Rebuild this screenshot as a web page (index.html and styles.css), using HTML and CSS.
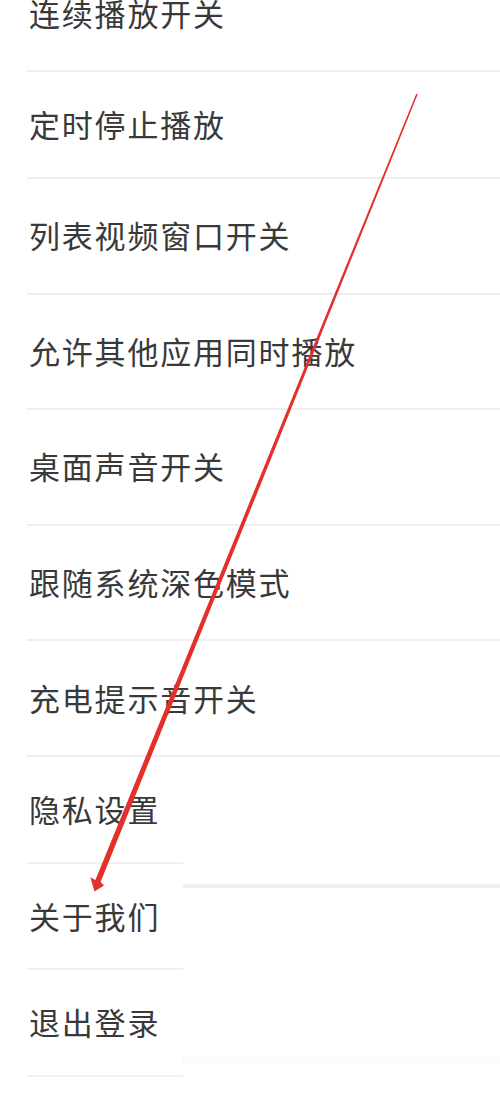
FILE: index.html
```
<!DOCTYPE html>
<html lang="zh-CN">
<head>
<meta charset="utf-8">
<title>设置</title>
<link rel="stylesheet" href="styles.css">
</head>
<body>
<div class="page">
  <div class="list">
    <div class="row first"><span class="label">连续播放开关</span></div>
    <div class="row short"><span class="label">定时停止播放</span></div>
    <div class="row"><span class="label">列表视频窗口开关</span></div>
    <div class="row"><span class="label">允许其他应用同时播放</span></div>
    <div class="row"><span class="label">桌面声音开关</span></div>
    <div class="row"><span class="label">跟随系统深色模式</span></div>
    <div class="row"><span class="label">充电提示音开关</span></div>
  </div>
  <div class="bottom">
    <div class="bottom-left">
      <div class="row small"><span class="label">隐私设置</span></div>
      <div class="row small"><span class="label">关于我们</span></div>
      <div class="row small"><span class="label">退出登录</span></div>
    </div>
    <div class="bottom-right">
      <div class="band band-a"></div>
      <div class="band band-b"></div>
    </div>
  </div>
  <svg class="arrow" width="500" height="1113" viewBox="0 0 500 1113" aria-hidden="true">
    <polygon points="416.3,93.8 417.7,94.2 100.6,882 104,885.5 94.5,891.5 90.3,877.3 95.4,880" fill="#e3302a"/>
  </svg>
</div>
</body>
</html>
```
FILE: styles.css
```
html, body {
  margin: 0;
  padding: 0;
  background: #ffffff;
}

.page {
  position: relative;
  width: 500px;
  height: 1113px;
  overflow: hidden;
  font-family: "Noto Sans CJK SC", "Noto Sans", sans-serif;
  color: #393939;
}

.list {
  margin-top: -43.6px;
}

.row {
  box-sizing: border-box;
  margin-left: 27px;
  padding-left: 2px;
  padding-bottom: 2px;
  height: 115.6px;
  display: flex;
  align-items: center;
  border-bottom: 2px solid #eeeeee;
}

.row.first {
  height: 115.6px;
}

.row.short {
  height: 107px;
}

.row.small {
  height: 106.7px;
  border-bottom-color: #f0f0f0;
}

.label {
  font-size: 31px;
  letter-spacing: 1.8px;
  line-height: 1;
  white-space: nowrap;
}

.bottom {
  display: flex;
}

.bottom-left {
  width: 183px;
  flex: none;
}

.bottom-right {
  flex: 1;
  padding-top: 127px;
}

.band {
  width: 100%;
}

.band-a {
  height: 4px;
  background: #f1f1f1;
}

.band-b {
  height: 7px;
  margin-top: 168px;
  background: #fafafa;
}

.arrow {
  position: absolute;
  left: 0;
  top: 0;
  pointer-events: none;
}
```
